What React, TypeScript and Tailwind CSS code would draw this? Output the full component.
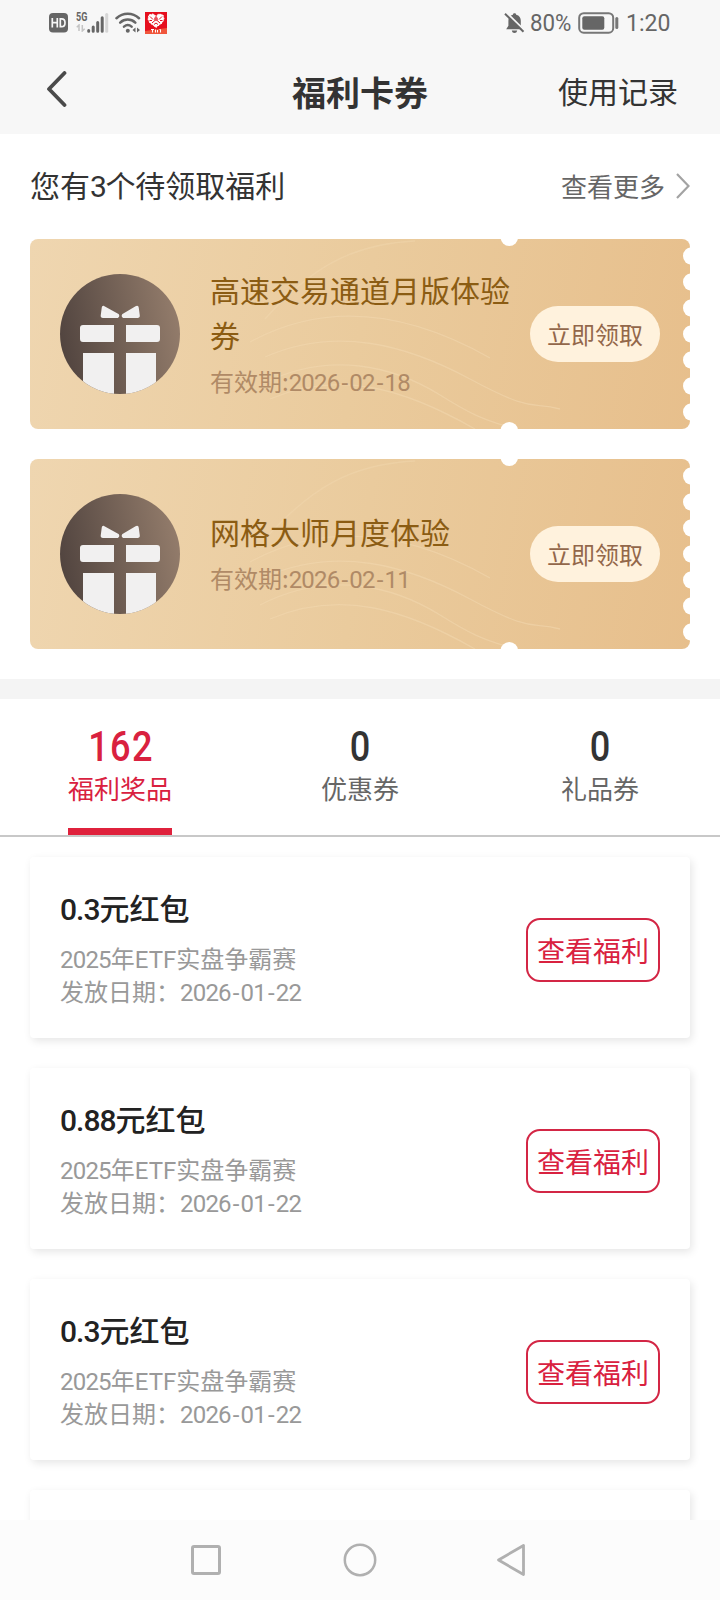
import clsx from 'clsx'

type Coupon = {
  name: string
  expires: string
}

type Prize = {
  amount: string
  date: string
}

const coupons: Coupon[] = [
  { name: '高速交易通道月版体验券', expires: '2026-02-18' },
  { name: '网格大师月度体验', expires: '2026-02-11' },
]

const tabs = [
  { label: '福利奖品', count: 162 },
  { label: '优惠券', count: 0 },
  { label: '礼品券', count: 0 },
]

const prizes: Prize[] = [
  { amount: '0.3', date: '2026-01-22' },
  { amount: '0.88', date: '2026-01-22' },
  { amount: '0.3', date: '2026-01-22' },
]

// centres of the punched holes along the right edge
const holes = [17, 43, 69, 95, 121, 147, 173]

const DateText = ({ value }: { value: string }) => (
  <span className="font-['Roboto'] leading-none tracking-[-0.8px]">
    {value.split('-').map((part, i) => (
      <span key={i}>
        {i > 0 && <span className="mx-[2px]">-</span>}
        {part}
      </span>
    ))}
  </span>
)

const StatusBar = () => (
  <div className="flex h-[46px] items-center pr-[49px] pl-[49px] text-[#666]">
    <svg width="19" height="20" viewBox="0 0 19 20">
      <rect width="19" height="19.5" rx="4" fill="#666" />
      <path
        d="M3.3 5v9.5M8.3 5v9.5M3.3 9.7h5M11.3 5.8v7.9h1.4c2.3 0 3.3-1.6 3.3-4s-1-3.9-3.3-3.9z"
        fill="none"
        stroke="#f7f7f7"
        strokeWidth="1.7"
      />
    </svg>
    <div className="ml-2 flex h-[22px]">
      <div className="flex w-[11px] flex-col">
        <span className="origin-left scale-x-75 font-['Roboto'] text-[12px] leading-[11px] font-bold">
          5G
        </span>
        <svg className="mt-px" width="11" height="8" viewBox="0 0 11 8">
          <path d="M3 7V1L.8 3.2M6.3 1v6l2.4-2.2" fill="none" stroke="#c4c4c4" strokeWidth="1.5" />
        </svg>
      </div>
      <svg width="22" height="22" viewBox="0 0 22 22" strokeLinecap="round" strokeWidth="3">
        <path d="M1.7 19.2v-.8M6.2 19.2V15M10.700 19.2v-8.6M15.200 19.2V5.8" stroke="#666" />
        <path d="M19.7 19.2V2.600" stroke="#d6d6d6" />
      </svg>
    </div>
    <svg className="ml-1.5" width="26" height="22" viewBox="0 0 26 22" fill="none">
      <path
        d="M1.5 6.2C8 .4 17.5.4 24 6.2M5.2 10.6c4.4-4 10.7-4 15.1 0M9 14.6c2.4-2 5.200-2 7.600 0"
        stroke="#666"
        strokeWidth="2.5"
        strokeLinecap="round"
      />
      <circle cx="12.8" cy="18.8" r="2" fill="#666" />
      <path d="M20.500 15.5v5l-3-2.500zM22 15.5v5l3-2.500z" fill="#666" />
    </svg>
    <svg className="ml-[4px]" width="22" height="22" viewBox="0 0 22 22">
      <rect width="22" height="22" fill="#e60f1e" />
      <path d="M0 19l22-3v6H0z" fill="#f0563c" />
      <path
        d="M4 3l4-1 3 2 3-2 4 1 1 4-2 4-3 2-3 2.5-3-2.5-3-2-2-4z"
        fill="#fff"
        stroke="#fff"
        strokeDasharray="2 1"
      />
      <path
        d="M5 4.500l3 3M17 4.500l-3 3M7 11l4-3.500 4 3.500M9 12.500l2-1.500 2 1.500M4.500 8.500h2.500M15 8.500h2.500M11 3.500v3"
        fill="none"
        stroke="#e60f1e"
        strokeWidth="1"
      />
      <circle cx="11" cy="7" r="2" fill="#e8505a" />
      <path d="M6 17.5h3M7.5 17.5v3M10.5 17.5v3M12.5 18v2.5M14.5 17.5h1v3" stroke="#fff" fill="none" />
    </svg>

    <svg className="ml-auto" width="21" height="22" viewBox="0 0 21 22">
      <path
        d="M10.5 1.2c1.2 0 1.7.7 1.7 1.5 3.2.8 4.6 3.1 4.6 6v5.1l2.2 3.4H2.2l2.2-3.4V8.7c0-2.9 1.4-5.2 4.5-6 0-.8.5-1.5 1.6-1.5zM7.8 18.5h5.4c-.3 1.700-1.300 2.500-2.700 2.500s-2.400-.8-2.700-2.500z"
        fill="#666"
      />
      <path d="M2.5.8l18.5 18" stroke="#f7f7f7" strokeWidth="2" />
      <path d="M1 1.8l18.5 18" stroke="#666" strokeWidth="2" />
    </svg>
    <span className="ml-[5px] w-[44px] origin-left scale-x-[.97] pt-px font-['Roboto'] text-[23px] leading-none whitespace-nowrap">
      80%
    </span>
    <svg className="ml-[4px]" width="41" height="22" viewBox="0 0 41 22">
      <rect x="1.2" y="1.2" width="34" height="19.5" rx="4.5" fill="none" stroke="#777" strokeWidth="2" />
      <rect x="4.3" y="4.3" width="22" height="13.4" rx="2" fill="#666" />
      <path d="M38.8 6.5v9" stroke="#777" strokeWidth="3" strokeLinecap="round" />
    </svg>
    <span className="ml-[7px] w-[45px] pt-px font-['Roboto'] text-[23px] leading-none">1:20</span>
  </div>
)

const Header = () => (
  <header className="h-[134px] bg-[#f7f7f7]">
    <StatusBar />
    <div className="grid h-[88px] grid-cols-3 items-center pr-[42px] pl-[46px]">
      <svg className="mb-[2px]" width="22" height="36" viewBox="0 0 22 36">
        <path
          d="M18.5 2L3 18l15.5 16"
          fill="none"
          stroke="#4a4a4a"
          strokeWidth="3.8"
          strokeLinecap="round"
          strokeLinejoin="round"
        />
      </svg>
      <h1 className="-ml-1 pt-[3px] text-center text-[34px] leading-none font-bold text-[#333]">福利卡券</h1>
      <span className="pb-px text-right text-[30px] leading-none">使用记录</span>
    </div>
  </header>
)

const GiftIcon = () => (
  <svg className="shrink-0" width="120" height="120" viewBox="0 0 120 120">
    <defs>
      <linearGradient id="gift" x1="0" y1=".6" x2="1" y2=".4">
        <stop offset="0" stopColor="#51443f" />
        <stop offset="1" stopColor="#937c6b" />
      </linearGradient>
      <clipPath id="disc">
        <circle cx="60" cy="60" r="60" />
      </clipPath>
    </defs>
    <circle cx="60" cy="60" r="60" fill="url(#gift)" />
    <g fill="#f1f0f0" clipPath="url(#disc)">
      <path d="M44 32L58.5 40c1.5 1.2.8 4-1.5 4H43c-1.7 0-2.5-1-2.3-2.500l1-7.500c.2-1.500 1-2.500 2.300-2zM76 32L62.500 40c-1.500 1.200-.8 4 1.500 4h13.500c1.700 0 2.500-1 2.300-2.500l-1-7.500c-.2-1.500-1-2.500-2.300-2z" />
      <path d="M23 51h31v17H23a3 3 0 0 1-3-3V54a3 3 0 0 1 3-3zM66 51h31a3 3 0 0 1 3 3v11a3 3 0 0 1-3 3H66z" />
      <path d="M23 79h31v41H23zM66 79h30v41H66z" />
    </g>
  </svg>
)

const TicketDecor = () => (
  <svg className="absolute inset-0" width="660" height="190" viewBox="0 0 660 190">
    <g fill="none" stroke="#f3d9b1" strokeOpacity=".5" strokeWidth="1.3">
      <path d="M235 80C280 30 320 5 385 2" strokeOpacity=".4" />
      <path d="M220 103C290 65 370 68 460 119" />
      <path d="M235 118C305 87 375 105 440 140S500 162 530 170" />
      <path d="M230 146C300 110 365 128 410 156S460 181 478 188" />
      <path d="M240 160C310 130 375 150 445 190" />
    </g>
    <g fill="#fff">
      <circle cx="479.3" cy="-1.7" r="8.7" />
      <circle cx="479.3" cy="191.7" r="8.7" />
      {holes.map((y) => (
        <circle key={y} cx="661.7" cy={y} r="8.7" />
      ))}
    </g>
  </svg>
)

const Ticket = ({ name, expires }: Coupon) => (
  <div className="relative h-[190px] rounded-lg bg-linear-[100deg,#efd6b0,#eacb9d_50%,#e7bf8c]">
    <TicketDecor />
    <div className="relative flex h-full items-center px-[30px]">
      <GiftIcon />
      <div className="ml-[30px] w-[300px] pb-[3px]">
        <div className="text-[30px] leading-[45px] text-[#8b5c13]">{name}</div>
        <div className="mt-[6px] text-[24px] leading-[36px] text-[#b08a66]">
          有效期:
          <DateText value={expires} />
        </div>
      </div>
      <button className="ml-auto h-[56px] w-[130px] rounded-full bg-[#fff2dd] text-[24px] leading-none text-[#93674a]">
        立即领取
      </button>
    </div>
  </div>
)

const cardClass =
  'h-[181px] shrink-0 rounded-[4px] bg-white px-[30px] shadow-[2px_3px_8px_rgba(0,0,0,0.1)]'

const PrizeCard = ({ amount, date }: Prize) => (
  <div className={clsx(cardClass, 'flex items-center justify-between')}>
    <div className="pb-[3px]">
      <div className="text-[30px] leading-[45px] font-medium text-[#222]">
        <span className="font-['Roboto'] leading-none tracking-[-1px]">{amount}</span>
        元红包
      </div>
      <div className="mt-[11px] text-[24px] leading-[33px] text-[#999]">
        <div>
          <span className="font-['Roboto'] leading-none tracking-[-0.8px]">2025</span>年
          <span className="font-['Roboto'] leading-none">ETF</span>
          实盘争霸赛
        </div>
        <div>
          发放日期：
          <DateText value={date} />
        </div>
      </div>
    </div>
    <button className="mt-[4px] h-[64px] w-[134px] rounded-[14px] border-2 border-[#d32645] text-[28px] leading-none text-[#d9213f]">
      查看福利
    </button>
  </div>
)

const NavBar = () => (
  <nav className="grid h-20 shrink-0 grid-cols-[1fr_122px_1fr] items-center bg-[#fcfcfc]">
    <svg className="mr-[77px] justify-self-end" width="32" height="32" viewBox="0 0 32 32">
      <rect x="2.5" y="2.5" width="27" height="27" rx="1.5" fill="none" stroke="#b0b0b0" strokeWidth="3" />
    </svg>
    <svg className="justify-self-center" width="34" height="34" viewBox="0 0 34 34">
      <circle cx="17" cy="17" r="15.2" fill="none" stroke="#b0b0b0" strokeWidth="2.5" />
    </svg>
    <svg className="ml-[75px]" width="32" height="36" viewBox="0 0 32 36">
      <path d="M27.5 3.5v29L2.5 18z" fill="none" stroke="#b0b0b0" strokeWidth="2.8" strokeLinejoin="round" />
    </svg>
  </nav>
)

const App = () => {
  return (
    <div className="flex h-[1600px] w-[720px] flex-col overflow-hidden bg-white font-['Noto_Sans_CJK_SC',sans-serif] text-[#333]">
      <Header />

      <section className="flex h-[545px] shrink-0 flex-col px-[30px] pb-[30px]">
        <div className="flex h-[105px] items-center justify-between pb-[2px]">
          <h2 className="text-[30px] leading-none">
            您有<span className="font-['Roboto'] leading-none tracking-[-1.500px]">3</span>个待领取福利
          </h2>
          <a className="flex items-center text-[26px] leading-none text-[#666]">
            查看更多
            <svg className="ml-[10px]" width="15" height="28" viewBox="0 0 15 28">
              <path d="M2 2l11.5 12L2 26" fill="none" stroke="#a3a3a3" strokeWidth="2.2" />
            </svg>
          </a>
        </div>
        <div className="flex flex-col gap-[30px]">
          {coupons.map((coupon) => (
            <Ticket key={coupon.name} {...coupon} />
          ))}
        </div>
      </section>

      <div className="h-5 shrink-0 bg-[#f4f4f4]" />

      <div className="grid h-[138px] shrink-0 grid-cols-3 border-b-2 border-[#c8c8c8]">
        {tabs.map(({ label, count }, i) => (
          <div key={label} className="flex flex-col items-center pt-[27px]">
            <span
              className={clsx(
                "scale-x-[.86] pl-[2px] font-['Roboto'] text-[42px] leading-[42px] font-medium tracking-[1.600px]",
                i === 0 ? 'text-[#d9213f]' : 'text-[#333]',
              )}
            >
              {count}
            </span>
            <span
              className={clsx(
                'mt-[2px] text-[26px] leading-[36px]',
                i === 0 ? 'text-[#d9213f]' : 'text-[#666]',
              )}
            >
              {label}
            </span>
            {i === 0 && <span className="mt-auto h-[7px] w-[104px] bg-[#df213c]" />}
          </div>
        ))}
      </div>

      <div className="flex min-h-0 flex-1 flex-col gap-[30px] overflow-hidden px-[30px] pt-5">
        {prizes.map((prize, i) => (
          <PrizeCard key={i} {...prize} />
        ))}
        <div className={cardClass} />
      </div>

      <NavBar />
    </div>
  )
}

export default App
